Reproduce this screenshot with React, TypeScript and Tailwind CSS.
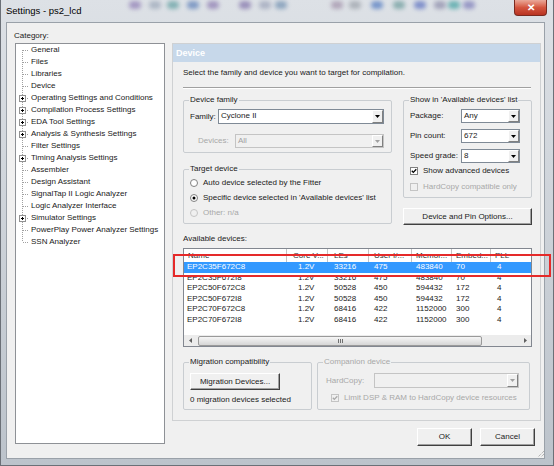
import React from "react";

type TreeItem = { label: string; plus?: boolean };

const treeItems: TreeItem[] = [
  { label: "General" },
  { label: "Files" },
  { label: "Libraries" },
  { label: "Device" },
  { label: "Operating Settings and Conditions", plus: true },
  { label: "Compilation Process Settings", plus: true },
  { label: "EDA Tool Settings", plus: true },
  { label: "Analysis & Synthesis Settings", plus: true },
  { label: "Filter Settings" },
  { label: "Timing Analysis Settings", plus: true },
  { label: "Assembler" },
  { label: "Design Assistant" },
  { label: "SignalTap II Logic Analyzer" },
  { label: "Logic Analyzer Interface" },
  { label: "Simulator Settings", plus: true },
  { label: "PowerPlay Power Analyzer Settings" },
  { label: "SSN Analyzer" },
];

const columns = [
  { title: "Name", w: "w-[103px]", hp: "pl-[4px]", dp: "pl-[3px]" },
  { title: "Core V...", w: "w-[41px]", hp: "pl-[6px]", dp: "pl-[11px]" },
  { title: "LEs", w: "w-[41px]", hp: "pl-[6px]", dp: "pl-[6px]" },
  { title: "User I/...", w: "w-[43px]", hp: "pl-[5px]", dp: "pl-[5px]" },
  { title: "Memor...", w: "w-[40px]", hp: "pl-[4px]", dp: "pl-[4px]" },
  { title: "Embed...", w: "w-[39px]", hp: "pl-[4px]", dp: "pl-[4px]" },
  { title: "PLL", w: "w-[40px]", hp: "pl-[4px]", dp: "pl-[6px]" },
];

const devices = [
  ["EP2C35F672C8", "1.2V", "33216", "475", "483840", "70", "4"],
  ["EP2C35F672I8", "1.2V", "33216", "475", "483840", "70", "4"],
  ["EP2C50F672C8", "1.2V", "50528", "450", "594432", "172", "4"],
  ["EP2C50F672I8", "1.2V", "50528", "450", "594432", "172", "4"],
  ["EP2C70F672C8", "1.2V", "68416", "422", "1152000", "300", "4"],
  ["EP2C70F672I8", "1.2V", "68416", "422", "1152000", "300", "4"],
];

// blurred desktop icons seen through the glass title bar
const spots = [
  { x: 128, c: "#8d7bb4" },
  { x: 148, c: "#9aa6b8" },
  { x: 166, c: "#5f9ea0" },
  { x: 186, c: "#5b7fb8" },
  { x: 206, c: "#8a78b0" },
  { x: 238, c: "#7f6fa8" },
  { x: 258, c: "#9aa2b8" },
  { x: 274, c: "#6f8fb0" },
  { x: 330, c: "#a08fa8" },
  { x: 348, c: "#9aa0a8" },
  { x: 370, c: "#4f78c0" },
  { x: 392, c: "#6a9a9a" },
  { x: 413, c: "#5a6fc0" },
  { x: 433, c: "#8a8aa8" },
  { x: 447, c: "#3fa0a0" },
  { x: 462, c: "#7a7ab8" },
];

function TreeLines({ first, last, plus }: { first: boolean; last: boolean; plus?: boolean }) {
  return (
    <svg width="15" height="12" className="shrink-0">
      <line x1="6.5" y1={first ? 6 : 0} x2="6.5" y2={last ? 6 : 12} stroke="#a0a0a0" strokeDasharray="1 1" />
      <line x1="7" y1="6.5" x2="13" y2="6.5" stroke="#a0a0a0" strokeDasharray="1 1" />
      {plus ? (
        <g>
          <rect x="3.5" y="3.5" width="6" height="6" fill="#fff" stroke="#919191" />
          <line x1="5" y1="6.5" x2="8" y2="6.5" stroke="#000" />
          <line x1="6.5" y1="5" x2="6.5" y2="8" stroke="#000" />
        </g>
      ) : null}
    </svg>
  );
}

function Arrow({ disabled }: { disabled?: boolean }) {
  return (
    <svg width="5" height="3">
      <path d="M0 0h5L2.5 3z" fill={disabled ? "#a0a0a0" : "#000"} />
    </svg>
  );
}

function Combo({ value, className, disabled }: { value?: string; className: string; disabled?: boolean }) {
  return (
    <div className={`flex h-[14px] border ${disabled ? "border-[#c4c4c4] bg-[#f0f0f0] text-[#a0a0a0]" : "border-[#7f8a96] bg-white"} ${className}`}>
      <div className="flex-1 pl-[2px] leading-[12px]">{value}</div>
      <div className="flex w-[11px] items-center justify-center border border-t-white border-l-white border-r-[#808080] border-b-[#808080] bg-[#f0f0f0]">
        <Arrow disabled={disabled} />
      </div>
    </div>
  );
}

function Radio({ checked, disabled }: { checked?: boolean; disabled?: boolean }) {
  return (
    <svg width="8" height="8" className="shrink-0">
      <circle cx="4" cy="4" r="3.5" fill={disabled ? "#f0f0f0" : "#fff"} stroke={disabled ? "#c4c4c4" : "#808080"} />
      {checked ? <circle cx="4" cy="4" r="1.5" fill="#000" /> : null}
    </svg>
  );
}

function Check({ checked, disabled }: { checked?: boolean; disabled?: boolean }) {
  return (
    <svg width="8" height="8" className="shrink-0">
      <rect x="0.5" y="0.5" width="7" height="7" fill={disabled ? "#f0f0f0" : "#fff"} stroke={disabled ? "#c4c4c4" : "#808080"} />
      {checked ? <path d="M1.8 3.8 L3.3 5.4 L6.3 2.2" fill="none" stroke={disabled ? "#a8a8a8" : "#000"} strokeWidth="1.3" /> : null}
    </svg>
  );
}

function Btn({ children, className }: { children: React.ReactNode; className: string }) {
  return (
    <div className={`flex items-center justify-center border border-t-white border-l-white border-r-[#404040] border-b-[#404040] bg-[#f0f0f0] shadow-[inset_-1px_-1px_0_#a0a0a0] ${className}`}>
      {children}
    </div>
  );
}

function Group({ title, disabled, className, children }: { title: string; disabled?: boolean; className: string; children: React.ReactNode }) {
  return (
    <fieldset className={`rounded-[2px] border border-[#c9cdd1] px-[6px] ${className}`}>
      <legend className={`ml-[-1px] px-[1px] leading-[10px] ${disabled ? "text-[#a8a8a8]" : ""}`}>{title}</legend>
      {children}
    </fieldset>
  );
}

export default function App() {
  return (
    <div className="relative flex h-[466px] w-[554px] flex-col overflow-hidden border-x border-b border-[#6b7077] bg-gradient-to-b from-[#dde1e6] to-[#bcc3cb] font-['Liberation_Sans',Arial,sans-serif] text-[8px] text-[#1a1a1a]">
      {/* title bar */}
      <div className="relative flex h-[22px] shrink-0 items-start">
        {spots.map((s) => (
          <div key={s.x} className="absolute top-[1px] h-[8px] w-[12px] rounded-full opacity-70 blur-[2px]" style={{ left: s.x, backgroundColor: s.c }} />
        ))}
        <span className="relative pl-[5px] pt-[5px] text-[9.5px] leading-[12px] text-black">Settings - ps2_lcd</span>
        <div className="flex-1" />
        <div className="relative mr-[6px] flex h-[16px] w-[33px] items-center justify-center rounded-b-[4px] border border-t-0 border-[#7a2a20] bg-gradient-to-b from-[#e9a899] via-[#d4553f] to-[#b83322]">
          <span className="text-[10px] font-bold leading-[10px] text-white">✕</span>
        </div>
      </div>

      {/* window body */}
      <div className="flex flex-1 pl-[5px] pr-[8px] pb-[6px]">
        <div className="flex flex-1 flex-col border border-[#9aa1a9] bg-[#f0f0f0] pt-[8px]">
          <div className="ml-[7px] h-[10px] leading-[10px]">Category:</div>
          <div className="mt-[2px] flex">
            {/* tree */}
            <div className="ml-[8px] h-[401px] w-[150px] border border-[#8e9196] bg-white">
              {treeItems.map((item, i) => (
                <div key={item.label} className="flex h-[12px] items-center whitespace-nowrap">
                  <TreeLines first={i === 0} last={i === treeItems.length - 1} plus={item.plus} />
                  <span className="leading-[12px]">{item.label}</span>
                </div>
              ))}
            </div>

            {/* right column */}
            <div className="ml-[7px] w-[369px]">
              <div className="h-[378px] border border-[#cfd1d3]">
                <div className="h-[18px] bg-[#c7d8ea] pl-[3px] text-[9px] font-bold leading-[18px] text-white">Device</div>
                <div className="pl-[10px]">
                  <div className="mt-[6px] h-[10px] leading-[10px]">Select the family and device you want to target for compilation.</div>
                  <div className="mt-[9px] h-[2px] w-[348px] border-t border-b border-t-[#a0a0a0] border-b-white" />

                  <div className="mt-[6px] flex">
                    <div className="w-[209px]">
                      <Group title="Device family" className="h-[58px]">
                        <div className="mt-[4px] flex h-[15px] items-center">
                          <span className="w-[28px]">Family:</span>
                          <Combo value="Cyclone II" className="h-[15px] w-[166px]" />
                        </div>
                        <div className="mt-[10px] flex h-[14px] items-center">
                          <span className="ml-[8px] w-[37px] text-[#a8a8a8]">Devices:</span>
                          <Combo value="All" className="w-[149px]" disabled />
                        </div>
                      </Group>
                      <Group title="Target device" className="mt-[11px] h-[60px]">
                        <div className="mt-[1px] flex h-[15px] items-center gap-[5px]">
                          <Radio />
                          <span>Auto device selected by the Fitter</span>
                        </div>
                        <div className="flex h-[15px] items-center gap-[5px]">
                          <Radio checked />
                          <span>Specific device selected in 'Available devices' list</span>
                        </div>
                        <div className="flex h-[15px] items-center gap-[5px] text-[#a8a8a8]">
                          <Radio disabled />
                          <span>Other: n/a</span>
                        </div>
                      </Group>
                    </div>

                    <div className="ml-[11px] w-[129px]">
                      <Group title="Show in 'Available devices' list" className="h-[103px]">
                        <div className="mt-[4px] flex h-[14px] items-center">
                          <span className="w-[51px]">Package:</span>
                          <Combo value="Any" className="w-[59px]" />
                        </div>
                        <div className="mt-[6px] flex h-[14px] items-center">
                          <span className="w-[51px]">Pin count:</span>
                          <Combo value="672" className="w-[59px]" />
                        </div>
                        <div className="mt-[6px] flex h-[14px] items-center">
                          <span className="w-[51px]">Speed grade:</span>
                          <Combo value="8" className="w-[59px]" />
                        </div>
                        <div className="mt-[2px] flex h-[12px] items-center gap-[5px]">
                          <Check checked />
                          <span>Show advanced devices</span>
                        </div>
                        <div className="mt-[4px] flex h-[12px] items-center gap-[5px] text-[#a8a8a8]">
                          <Check disabled />
                          <span>HardCopy compatible only</span>
                        </div>
                      </Group>
                      <Btn className="mt-[10px] h-[17px] w-[129px]">Device and Pin Options...</Btn>
                    </div>
                  </div>

                  <div className="mt-[9px] h-[10px] leading-[10px]">Available devices:</div>

                  {/* device list */}
                  <div className="mt-[4px] flex h-[99px] w-[349px] flex-col border border-[#828790] bg-white">
                    <div className="flex h-[13px] shrink-0">
                      {columns.map((col, i) => (
                        <div key={col.title} className={`${col.w} ${col.hp} overflow-hidden whitespace-nowrap leading-[13px] text-[#333] ${i < columns.length - 1 ? "border-r border-[#c4c4c4]" : ""}`}>
                          {col.title}
                        </div>
                      ))}
                    </div>
                    <div className="h-[73px] overflow-hidden">
                      {devices.map((row, r) => (
                        <div key={row[0]} className={`flex h-[10.5px] ${r === 0 ? "bg-[#3399ff] text-white" : ""}`}>
                          {row.map((cell, c) => (
                            <div key={c} className={`${columns[c].w} ${columns[c].dp} whitespace-nowrap leading-[10.5px]`}>
                              {cell}
                            </div>
                          ))}
                        </div>
                      ))}
                    </div>
                    <div className="flex h-[11px] items-center bg-[#ececec]">
                      <div className="flex w-[13px] justify-center">
                        <svg width="3" height="5">
                          <path d="M3 0v5L0 2.5z" fill="#606060" />
                        </svg>
                      </div>
                      <div className="ml-[1px] flex h-[10px] w-[284px] items-center justify-center gap-[1px] rounded-[2px] border border-[#9a9a9a] bg-gradient-to-b from-[#f6f6f6] to-[#d6d6d6]">
                        <div className="h-[4px] w-[1px] bg-[#707070]" />
                        <div className="h-[4px] w-[1px] bg-[#707070]" />
                        <div className="h-[4px] w-[1px] bg-[#707070]" />
                      </div>
                      <div className="flex-1" />
                      <div className="flex w-[11px] justify-center">
                        <svg width="3" height="5">
                          <path d="M0 0v5L3 2.5z" fill="#606060" />
                        </svg>
                      </div>
                    </div>
                  </div>

                  <div className="mt-[10px] flex">
                    <Group title="Migration compatibility" className="h-[53px] w-[129px]">
                      <Btn className="mt-[6px] h-[17px] w-[90px]">Migration Devices...</Btn>
                      <div className="mt-[5px] h-[10px] leading-[10px]">0 migration devices selected</div>
                    </Group>
                    <Group title="Companion device" disabled className="ml-[5px] h-[53px] w-[213px]">
                      <div className="mt-[6px] flex h-[15px] items-center">
                        <span className="ml-[2px] w-[48px] text-[#a8a8a8]">HardCopy:</span>
                        <Combo className="h-[15px] w-[145px]" disabled />
                      </div>
                      <div className="mt-[5px] flex h-[10px] items-center gap-[5px] text-[#a8a8a8]">
                        <span className="ml-[2px]" />
                        <Check checked disabled />
                        <span>Limit DSP &amp; RAM to HardCopy device resources</span>
                      </div>
                    </Group>
                  </div>
                </div>
              </div>

              <div className="mt-[7px] flex justify-end gap-[8px] pr-[6px]">
                <Btn className="h-[18px] w-[55px]">OK</Btn>
                <Btn className="h-[18px] w-[55px]">Cancel</Btn>
              </div>
            </div>
          </div>
        </div>
      </div>

      {/* resize grip */}
      <svg width="8" height="8" className="absolute right-[8px] bottom-[7px]">
        <path d="M7 1 L1 7 M7 4 L4 7" stroke="#9a9a9a" strokeDasharray="1 1" />
      </svg>

      {/* annotation box */}
      <div className="absolute left-[172px] top-[254px] h-[23px] w-[378px] border-2 border-[#e52a2a]" />
    </div>
  );
}
